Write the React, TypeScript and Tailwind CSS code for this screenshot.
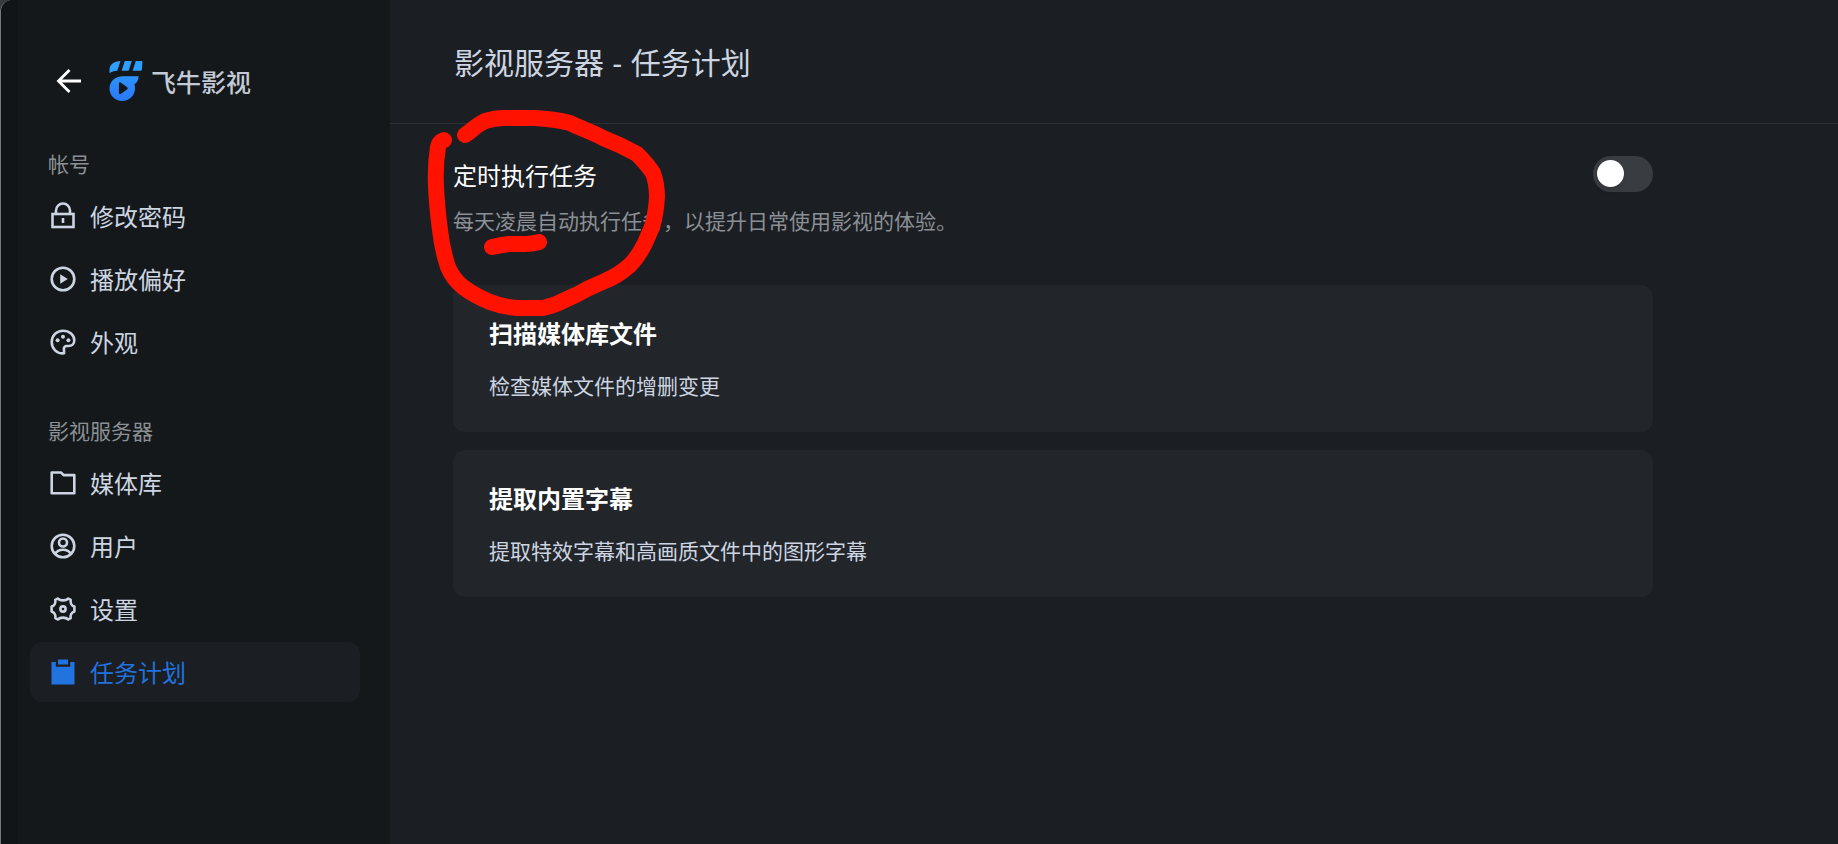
import React, { useState } from "react";

interface MenuItem {
  id: string;
  label: string;
  icon: React.ReactNode;
}

interface MenuGroup {
  title: string;
  items: MenuItem[];
}

interface Task {
  name: string;
  description: string;
}

const iconProps = {
  width: 30,
  height: 30,
  viewBox: "0 0 30 30",
  fill: "none",
  stroke: "currentColor",
  strokeWidth: 2.6,
  "aria-hidden": true,
};

const LockIcon = () => (
  <svg {...iconProps}>
    <rect x="4.5" y="13" width="21" height="13" />
    <path d="M8 13V9.500a7 7 0 0 1 14 0V13" />
    <path d="M15 17v5" />
  </svg>
);

const PlayIcon = () => (
  <svg {...iconProps}>
    <circle cx="15" cy="15" r="11.3" />
    <path d="M12.2 10.2v9.600l7.600-4.8z" fill="currentColor" stroke="none" />
  </svg>
);

const PaletteIcon = () => (
  <svg {...iconProps}>
    <path
      d="M16 26.300C8.600 27 3.700 21.400 3.700 15 3.700 8.600 8.700 3.700 15 3.700S26.300 8 26.300 13.200c0 3.800-2.600 5.800-5.800 5.800h-1.700c-2.200 0-3.100 1.500-2.900 3.200.1 1.500.3 2.600.1 4.100z"
      strokeLinejoin="round"
    />
    <circle cx="15" cy="9.700" r="2" fill="currentColor" stroke="none" />
    <circle cx="9.600" cy="13.300" r="2" fill="currentColor" stroke="none" />
    <circle cx="20.400" cy="13.300" r="2" fill="currentColor" stroke="none" />
  </svg>
);

const FolderIcon = () => (
  <svg {...iconProps}>
    <path d="M3.700 4.500h9.300l2.600 2.600h10.700v18.200H3.700z" strokeLinejoin="round" />
  </svg>
);

const UserIcon = () => (
  <svg {...iconProps}>
    <circle cx="15" cy="15" r="11.300" />
    <circle cx="15" cy="11.500" r="4" />
    <path d="M7 23.200c1.800-3.200 4.700-4.400 8-4.400s6.200 1.200 8 4.400" />
  </svg>
);

const SettingIcon = () => (
  <svg {...iconProps}>
    <path
      d="M9.700 4.500c1.300 1.300 3 1.900 5.300 1.900s4-.6 5.300-1.900l2.400 1.400c-.5 2.700.6 5.700 3.700 6.700v4.800c-3.100 1-4.200 4-3.700 6.700l-2.400 1.400c-1.300-1.300-3-1.900-5.300-1.900s-4 .6-5.300 1.900l-2.400-1.400c.5-2.700-.6-5.700-3.700-6.700v-4.800c3.100-1 4.200-4 3.700-6.700z"
      strokeLinejoin="round"
    />
    <circle cx="15" cy="15" r="2.600" />
  </svg>
);

const TaskIcon = () => (
  <svg {...iconProps} fill="currentColor" stroke="none">
    <path d="M10 2.500h10v5H10z" />
    <path d="M3.500 5h4.300v4.700h14.400V5h4.300v22.500h-23z" />
  </svg>
);

const Logo = () => (
  <svg width="34" height="40" viewBox="0 0 34 40" aria-hidden="true">
    <defs>
      <linearGradient id="logo-fill" x1="0" y1="0" x2="0" y2="1">
        <stop offset="0" stopColor="#2c93fd" />
        <stop offset="1" stopColor="#2a78fa" />
      </linearGradient>
    </defs>
    <path d="M11.500 0 8.300 9.700C5 9.700 2.500 10.500.5 12.300V9C.5 3.500 5 0 11.500 0z" fill="#2f9fff" />
    <path d="M15.800 0h7l-3.200 9.700h-7z" fill="#2f9fff" />
    <path d="M26.800 0h5.400c.8 0 1.300.6 1.200 1.400l-.5 7.200c0 .7-.5 1.100-1.200 1.100h-8z" fill="#2f9fff" />
    <path
      d="M14 15.200h15.600c-.2 4-1.600 7-4.200 7.800.4 1.300.6 2.600.6 4C26 34.500 20.500 40 13.200 40S.500 34.500.500 27.300C.500 20.600 6 15.200 14 15.200zM9.900 22.600v9.400c0 1 1 1.500 1.800 1l6.400-4.500c.8-.6.8-1.700 0-2.300l-6.400-4.600c-.8-.6-1.800 0-1.800 1z"
      fill="url(#logo-fill)"
      fillRule="evenodd"
    />
  </svg>
);

const menuGroups: MenuGroup[] = [
  {
    title: "帐号",
    items: [
      { id: "password", label: "修改密码", icon: <LockIcon /> },
      { id: "playback", label: "播放偏好", icon: <PlayIcon /> },
      { id: "appearance", label: "外观", icon: <PaletteIcon /> },
    ],
  },
  {
    title: "影视服务器",
    items: [
      { id: "library", label: "媒体库", icon: <FolderIcon /> },
      { id: "users", label: "用户", icon: <UserIcon /> },
      { id: "settings", label: "设置", icon: <SettingIcon /> },
      { id: "tasks", label: "任务计划", icon: <TaskIcon /> },
    ],
  },
];

const tasks: Task[] = [
  { name: "扫描媒体库文件", description: "检查媒体文件的增删变更" },
  { name: "提取内置字幕", description: "提取特效字幕和高画质文件中的图形字幕" },
];

const Sidebar = ({ active }: { active: string }) => {
  return (
    <aside className="w-[390px] shrink-0 rounded-tl-xl border-l border-[#77797a] bg-[#14181a]">
      <div className="h-full rounded-tl-xl border-l-[17px] border-[#121518] pl-3 pr-[30px] pt-[60px]">
        <div className="flex h-[42px] items-center pl-6">
          <button type="button" aria-label="返回" className="text-white">
            <svg width="30" height="30" viewBox="0 0 30 30" fill="none" stroke="currentColor" strokeWidth="2.800" aria-hidden="true">
              <path d="M27 15H5M15.500 4 4.500 15l11 11" />
            </svg>
          </button>
          <div className="ml-[25px] flex items-center gap-2">
            <Logo />
            <span className="text-[25px] font-medium leading-9 text-[#c3cad6]">飞牛影视</span>
          </div>
        </div>
        <nav className="mt-[45px] flex flex-col gap-[42px]">
          {menuGroups.map((group) => (
            <div key={group.title}>
              <h2 className="mb-[7px] pl-[18px] text-[21px] leading-8 text-[#8b9096]">{group.title}</h2>
              <ul className="flex flex-col gap-[3px]">
                {group.items.map((item) => (
                  <li key={item.id}>
                    <a
                      href={`#${item.id}`}
                      className={
                        item.id === active
                          ? "flex h-[60px] items-center gap-3 rounded-xl bg-[#1b1e22] px-[18px] text-2xl text-[#2173df]"
                          : "flex h-[60px] items-center gap-3 rounded-xl px-[18px] text-2xl text-[#ccd5e1]"
                      }
                    >
                      {item.icon}
                      <span>{item.label}</span>
                    </a>
                  </li>
                ))}
              </ul>
            </div>
          ))}
        </nav>
      </div>
    </aside>
  );
};

const PenMarks = () => (
  <svg
    className="pointer-events-none absolute left-0 top-0"
    width="300"
    height="330"
    viewBox="390 0 300 330"
    fill="none"
    stroke="#ff1200"
    strokeWidth="16"
    strokeLinecap="round"
    strokeLinejoin="round"
    aria-hidden="true"
  >
    <path d="M465 135C472 131 476 125 485 121Q495 118 503 118H535Q554 119 570 123C582 129 592 132 603 138Q621 145 637 154Q647 164 653 173Q657 184 657 197Q656 214 652 227Q649 234 645 243Q639 256 630 265Q619 275 607 280Q598 284 587 289Q577 295 567 299Q556 305 543 308H517Q503 307 490 302Q475 296 463 287Q453 279 448 267Q442 249 440 230Q437 207 436 187Q435 165 438 147Q439 142 444 140" />
    <path d="M492 247Q501 245 509 244H525Q532 244 539 242" />
  </svg>
);

const App = () => {
  const [scheduled, setScheduled] = useState(false);

  return (
    <div className="flex min-h-screen bg-[#3a3b3c] font-['Noto_Sans_CJK_SC',sans-serif]">
      <Sidebar active="tasks" />
      <main className="relative min-w-0 flex-1 bg-[#1b1e22]">
        <header className="flex h-[124px] items-center border-b border-[#2d3034] px-16 pt-1">
          <h1 className="font-['Liberation_Sans','Noto_Sans_CJK_SC',sans-serif] text-[30px] leading-10 text-[#ccd5e1]">
            影视服务器 - 任务计划
          </h1>
        </header>
        <div className="max-w-[1326px] px-[63px] pt-8">
          <div className="flex items-start justify-between">
            <div>
              <label htmlFor="scheduled" className="block text-2xl leading-[38px] text-white">
                定时执行任务
              </label>
              <p className="mt-[10px] text-[21px] leading-8 text-[#8b9096]">
                每天凌晨自动执行任务，以提升日常使用影视的体验。
              </p>
            </div>
            <input
              id="scheduled"
              type="checkbox"
              role="switch"
              checked={scheduled}
              onChange={(e) => setScheduled(e.target.checked)}
              className="h-9 w-[60px] shrink-0 appearance-none rounded-full bg-[#393c40] p-1 before:block before:size-[27px] before:rounded-full before:bg-white before:shadow-md checked:bg-[#2173df] checked:before:ml-6"
            />
          </div>
          <ul className="mt-[49px] flex flex-col gap-[18px]">
            {tasks.map((task) => (
              <li key={task.name} className="rounded-xl bg-[#222529] px-9 pb-[31px] pt-[30px]">
                <h3 className="text-2xl font-bold leading-9 text-white">{task.name}</h3>
                <p className="mt-[18px] text-[21px] leading-8 text-[#ccd5e1]">{task.description}</p>
              </li>
            ))}
          </ul>
        </div>
        <PenMarks />
      </main>
    </div>
  );
};

export default App;
